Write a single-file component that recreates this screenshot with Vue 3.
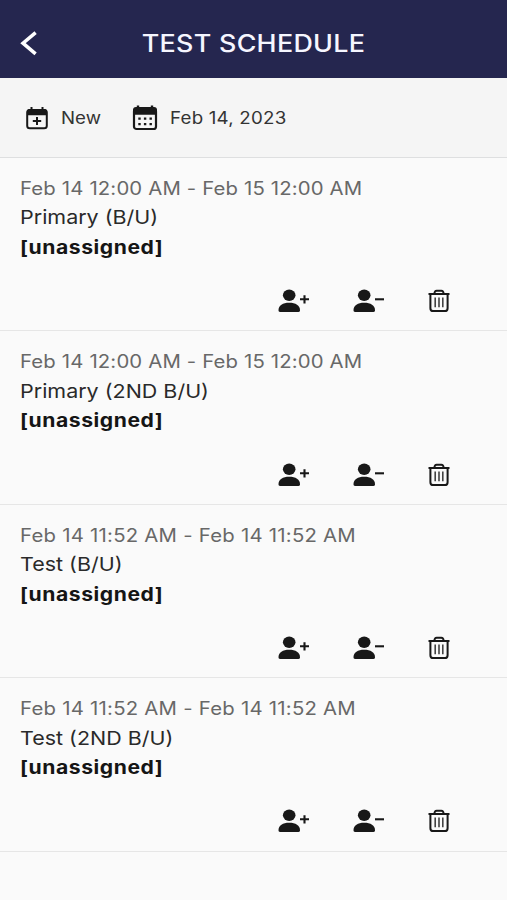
<script setup>
const shifts = [
  { time: 'Feb 14 12:00 AM - Feb 15 12:00 AM', role: 'Primary (B/U)' },
  { time: 'Feb 14 12:00 AM - Feb 15 12:00 AM', role: 'Primary (2ND B/U)' },
  { time: 'Feb 14 11:52 AM - Feb 14 11:52 AM', role: 'Test (B/U)' },
  { time: 'Feb 14 11:52 AM - Feb 14 11:52 AM', role: 'Test (2ND B/U)' },
]
</script>

<template>
  <div class="screen">
    <header class="header">
      <button class="back" aria-label="Back">
        <svg width="20" height="28" viewBox="0 0 20 28"><path d="M16.600 3.600 4 14.200l12.600 10.600" fill="none" stroke="#fff" stroke-width="3.500" /></svg>
      </button>
      <h1 class="title">TEST SCHEDULE</h1>
    </header>

    <nav class="toolbar">
      <button class="tool tool-new">
        <svg width="22" height="24" viewBox="0 0 22 24">
          <path d="M5.500 1v4M16.500 1v4" stroke="#181818" stroke-width="2" />
          <rect x="1.200" y="4" width="19.600" height="18.300" rx="2.600" fill="none" stroke="#181818" stroke-width="2" />
          <path d="M1 9.300V5.500A2.500 2.500 0 0 1 3.500 3h15A2.500 2.500 0 0 1 21 5.500V9.300Z" fill="#181818" />
          <path d="M11 11v8M6.800 15h8.400" stroke="#181818" stroke-width="2" />
        </svg>
        <span>New</span>
      </button>
      <button class="tool tool-date">
        <svg width="26" height="26" viewBox="0 0 26 26">
          <path d="M6 .6v4M20 .6v4" stroke="#181818" stroke-width="2.400" />
          <rect x="2" y="4" width="22" height="20" rx="2.600" fill="none" stroke="#181818" stroke-width="2.200" />
          <path d="M1 9.700V5A3 3 0 0 1 4 2h18a3 3 0 0 1 3 3V9.700Z" fill="#181818" />
          <path d="M6.300 13.700h2.400M11.900 13.700h2.400M17.500 13.700h2.400M6.300 19.200h2.400M11.900 19.200h2.400M17.500 19.200h2.400" stroke="#181818" stroke-width="2.300" />
        </svg>
        <span>Feb 14, 2023</span>
      </button>
    </nav>

    <main>
      <article v-for="(shift, i) in shifts" :key="i" class="shift">
        <div class="time" :class="{ loose: shift.time.includes('11:52') }">{{ shift.time }}</div>
        <div class="role">{{ shift.role }}</div>
        <div class="assignee">[unassigned]</div>
        <div class="actions">
          <button aria-label="Assign">
            <svg width="34" height="26" viewBox="0 0 34 26">
              <ellipse cx="12.200" cy="7.300" rx="6.300" ry="5.700" fill="#181818" />
              <path d="M1.500 22.300c0-5 4.300-7.500 10.700-7.500s10.800 2.500 10.800 7.500c0 1-.5 1.700-1.500 1.700H3c-1 0-1.500-.700-1.500-1.700Z" fill="#181818" />
              <path d="M23 11.300h9M27.500 7.200v8.200" stroke="#181818" stroke-width="2.100" />
            </svg>
          </button>
          <button aria-label="Unassign">
            <svg width="34" height="26" viewBox="0 0 34 26">
              <ellipse cx="12.200" cy="7.300" rx="6.300" ry="5.700" fill="#181818" />
              <path d="M1.500 22.300c0-5 4.300-7.500 10.700-7.500s10.800 2.500 10.800 7.500c0 1-.5 1.700-1.500 1.700H3c-1 0-1.500-.700-1.500-1.700Z" fill="#181818" />
              <path d="M23 11.300h9" stroke="#181818" stroke-width="2.100" />
            </svg>
          </button>
          <button aria-label="Delete">
            <svg width="24" height="26" viewBox="0 0 24 26" fill="none" stroke="#181818">
              <path d="M1.500 6h21" stroke-width="2" />
              <path d="M7.300 5.800c.2-2 .9-3 2.300-3h4.800c1.400 0 2.100 1 2.300 3" stroke-width="1.900" />
              <path d="M3.400 6.200V20.200A2.900 2.900 0 0 0 6.300 23.100h11.400a2.900 2.900 0 0 0 2.900-2.900V6.200" stroke-width="2" />
              <path d="M8.200 9.500v9.800M12 9.500v9.800M15.800 9.500v9.800" stroke="#444" stroke-width="1.600" />
            </svg>
          </button>
        </div>
      </article>
    </main>
  </div>
</template>

<style>
body {
  margin: 0;
  background: #fafafa;
}
</style>

<style scoped>
.screen {
  box-sizing: border-box;
  width: 507px;
  height: 900px;
  overflow: hidden;
  background: #fafafa;
  font-family: Inter, 'Liberation Sans', sans-serif;
  color: #222;
}
button {
  display: flex;
  padding: 0;
  border: 0;
  background: none;
  font: inherit;
  color: inherit;
}
svg {
  display: block;
  flex: none;
}
.header {
  box-sizing: border-box;
  display: grid;
  grid-template-columns: 54px 1fr 54px;
  align-items: center;
  height: 78px;
  padding-top: 8px;
  background: #25264f;
}
.back {
  padding-left: 19px;
}
.title {
  margin: 2px 0 0;
  text-align: center;
  white-space: nowrap;
  font-size: 24px;
  line-height: 30px;
  font-weight: 500;
  letter-spacing: 0.250px;
  color: #f6f6ff;
  transform: scaleX(1.120);
}
.toolbar {
  box-sizing: border-box;
  display: flex;
  align-items: center;
  height: 80px;
  padding-left: 26px;
  border-bottom: 1px solid #dedfe0;
  background: #f5f5f5;
}
.tool {
  align-items: center;
  gap: 13px;
  white-space: nowrap;
  font-size: 16.700px;
  line-height: 24px;
  letter-spacing: 0.200px;
  color: #333;
}
.tool span {
  transform: scaleX(1.120);
  transform-origin: left;
}
.tool-new {
  width: 106px;
  letter-spacing: 0;
}
.tool-date {
  gap: 12px;
}
.shift {
  box-sizing: border-box;
  height: 173.400px;
  padding: 16px 56px 0 20px;
  border-bottom: 1px solid #e6e6e6;
  line-height: 29.400px;
  white-space: nowrap;
}
.time,
.role,
.assignee {
  transform: scaleX(1.130);
  transform-origin: left;
}
.time {
  font-size: 18px;
  letter-spacing: 0.130px;
  color: #686868;
}
.time.loose {
  letter-spacing: 0.210px;
}
.role {
  font-size: 19px;
  letter-spacing: 0;
  color: #2a2a2a;
}
.assignee {
  font-size: 18.700px;
  font-weight: 700;
  letter-spacing: 0.500px;
  color: #151515;
}
.actions {
  display: flex;
  justify-content: flex-end;
  gap: 41px;
  padding-top: 26px;
}
</style>
